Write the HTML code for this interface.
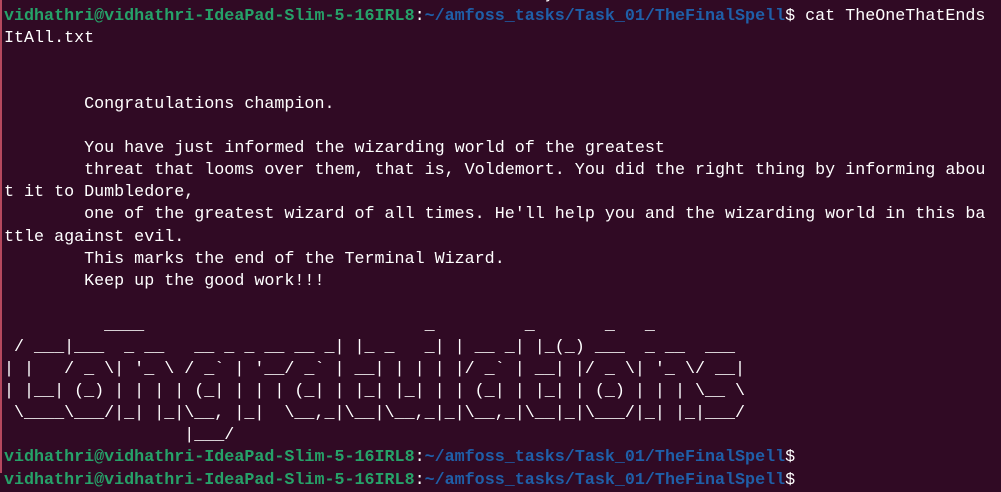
<!DOCTYPE html>
<html><head><meta charset="utf-8"><style>
html,body{margin:0;padding:0;width:1001px;height:473px;overflow:hidden;background:#300a24;}
.edge{position:absolute;left:0;top:0;width:2px;height:473px;background:#b5485e;}
pre{position:absolute;left:4px;top:-16.5px;margin:0;font-family:"Liberation Mono",monospace;font-size:16.7px;line-height:22.1px;color:#ffffff;white-space:pre;}
.g{color:#26a269;font-weight:bold;}
.b{color:#1f5fa8;font-weight:bold;}
</style></head><body>
<div class="edge"></div>
<pre>cat: TheOneThatEndsItAll.txt: No such file or directory
<span class="g">vidhathri@vidhathri-IdeaPad-Slim-5-16IRL8</span>:<span class="b">~/amfoss_tasks/Task_01/TheFinalSpell</span>$ cat TheOneThatEnds
ItAll.txt


        Congratulations champion.

        You have just informed the wizarding world of the greatest
        threat that looms over them, that is, Voldemort. You did the right thing by informing abou
t it to Dumbledore,
        one of the greatest wizard of all times. He'll help you and the wizarding world in this ba
ttle against evil.
        This marks the end of the Terminal Wizard.
        Keep up the good work!!!

          ____                            _         _       _   _
 / ___|___  _ __   __ _ _ __ __ _| |_ _   _| | __ _| |_(_) ___  _ __  ___
| |   / _ \| '_ \ / _` | '__/ _` | __| | | | |/ _` | __| |/ _ \| '_ \/ __|
| |__| (_) | | | | (_| | | | (_| | |_| |_| | | (_| | |_| | (_) | | | \__ \
 \____\___/|_| |_|\__, |_|  \__,_|\__|\__,_|_|\__,_|\__|_|\___/|_| |_|___/
                  |___/
<span class="g">vidhathri@vidhathri-IdeaPad-Slim-5-16IRL8</span>:<span class="b">~/amfoss_tasks/Task_01/TheFinalSpell</span>$
<span class="g">vidhathri@vidhathri-IdeaPad-Slim-5-16IRL8</span>:<span class="b">~/amfoss_tasks/Task_01/TheFinalSpell</span>$</pre>
</body></html>
